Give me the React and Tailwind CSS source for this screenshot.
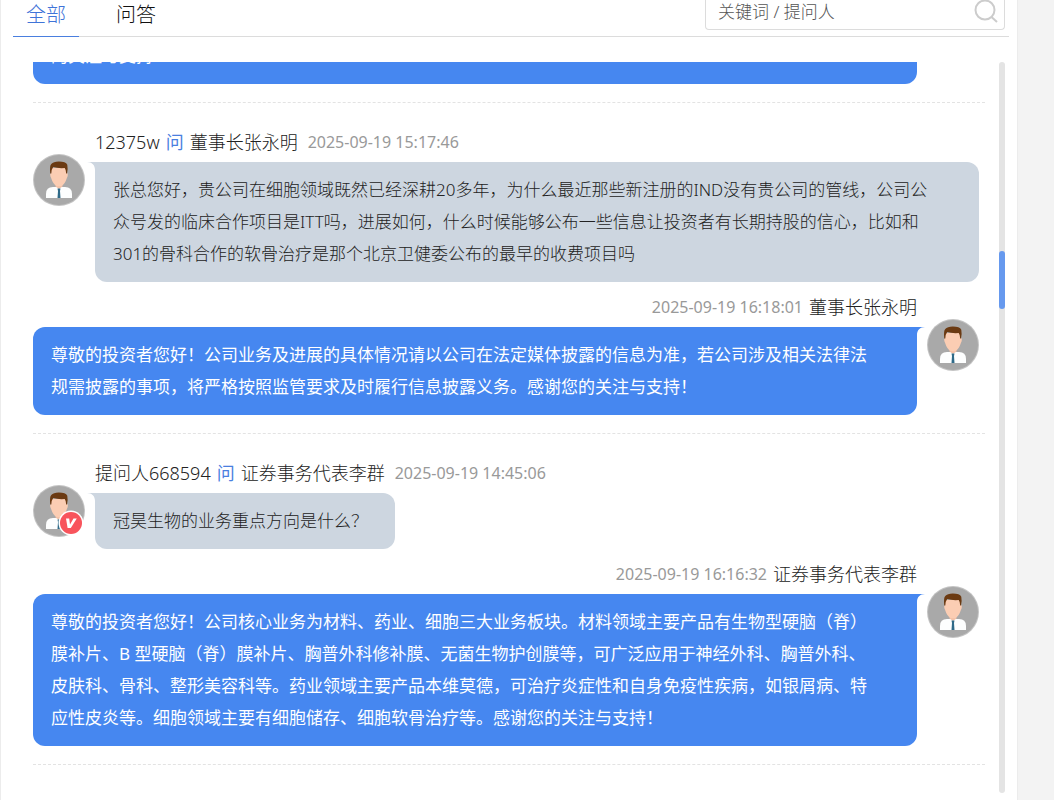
import React, { useState } from "react";

const items = [
  {
    id: 1,
    asker: "12375w",
    target: "董事长张永明",
    askedAt: "2025-09-19 15:17:46",
    question: [
      "张总您好，贵公司在细胞领域既然已经深耕20多年，为什么最近那些新注册的IND没有贵公司的管线，公司公",
      "众号发的临床合作项目是ITT吗，进展如何，什么时候能够公布一些信息让投资者有长期持股的信心，比如和",
      "301的骨科合作的软骨治疗是那个北京卫健委公布的最早的收费项目吗",
    ],
    repliedAt: "2025-09-19 16:18:01",
    answer: [
      "尊敬的投资者您好！公司业务及进展的具体情况请以公司在法定媒体披露的信息为准，若公司涉及相关法律法",
      "规需披露的事项，将严格按照监管要求及时履行信息披露义务。感谢您的关注与支持！",
    ],
  },
  {
    id: 2,
    asker: "提问人668594",
    verified: true,
    target: "证券事务代表李群",
    askedAt: "2025-09-19 14:45:06",
    question: ["冠昊生物的业务重点方向是什么？"],
    repliedAt: "2025-09-19 16:16:32",
    answer: [
      "尊敬的投资者您好！公司核心业务为材料、药业、细胞三大业务板块。材料领域主要产品有生物型硬脑（脊）",
      "膜补片、B 型硬脑（脊）膜补片、胸普外科修补膜、无菌生物护创膜等，可广泛应用于神经外科、胸普外科、",
      "皮肤科、骨科、整形美容科等。药业领域主要产品本维莫德，可治疗炎症性和自身免疫性疾病，如银屑病、特",
      "应性皮炎等。细胞领域主要有细胞储存、细胞软骨治疗等。感谢您的关注与支持！",
    ],
  },
];

const tabs = ["全部", "问答"];

function Avatar({ verified }) {
  return (
    <div className="relative mt-8 h-[52px] w-[52px] shrink-0">
      <svg viewBox="0 0 52 52" className="h-full w-full">
        <circle cx="26" cy="26" r="26" fill="#c4c4c4" />
        <circle cx="26" cy="26" r="25" fill="#a9a9a9" />
        <path d="M13 44v-4q0-7 7-7h12q7 0 7 7v4z" fill="#fdfefe" />
        <path d="M22.500 27h7v5.500L26 35l-3.500-2.500z" fill="#f3c2a8" />
        <path d="M18 14h16v5q1.200.3.700 3l-1 2.500Q32 30 28.500 32h-5Q20 30 18.300 24.500l-1-2.500q-.5-2.700.700-3z" fill="#fbcdb3" />
        <path d="M17.300 19.500q-1-7.500 1-9.500 2-2.500 7.500-2.500 7 0 8.500 3.200.8 3.800-.3 8.800h-.8q0-3.500-1.500-5.500-6.500.5-11.500-1-1.700 2-1.900 6.500z" fill="#6b3a12" />
        <path d="M24.500 34.500h3l-.5 2.500.5 7h-3l.5-7z" fill="#2f6a88" />
      </svg>
      {verified && (
        <svg viewBox="0 0 26 26" className="absolute right-px bottom-px h-[26px] w-[26px]">
          <circle cx="13" cy="13" r="12.500" fill="#fff" />
          <circle cx="13" cy="13" r="11" fill="#f8545c" />
          <path d="M8 8.500h3.200l.8 6 3.500-6h3.300L12.800 18H9.600z" fill="#fff" />
        </svg>
      )}
    </div>
  );
}

function Tail({ className, flip }) {
  return (
    <svg viewBox="0 0 8 8" className={className}>
      <path d={flip ? "M8 0H0v8C0 3 3 0 8 0z" : "M0 0h8v8C8 3 5 0 0 0z"} fill="currentColor" />
    </svg>
  );
}

function Question({ item }) {
  const long = item.question.length > 1;
  return (
    <div className="flex items-start gap-2.5">
      <Avatar verified={item.verified} />
      <div className={long ? "min-w-0 flex-1" : "min-w-0"}>
        <div className="flex h-10 items-center whitespace-nowrap text-lg text-[#222]">
          <span>{item.asker}</span>
          <span className="mx-1.5 font-normal text-[#4a7fdf]">问</span>
          <span>{item.target}</span>
          <time className="ml-2.5 text-base font-normal text-[#999]">{item.askedAt}</time>
        </div>
        <div
          className={`relative max-w-full rounded-xl rounded-tl-none bg-[#cdd6e0] py-3 pr-[27px] pl-[18px] text-[17px] leading-8 text-[#222] ${
            long ? "" : "w-fit"
          }`}
        >
          <Tail className="absolute top-0 -left-2 h-2 w-2 text-[#cdd6e0]" />
          {item.question.map((line) => (
            <p key={line}>{line}</p>
          ))}
        </div>
      </div>
    </div>
  );
}

function Answer({ item }) {
  return (
    <div className="mt-[5px] flex items-start gap-2.5">
      <div className="min-w-0 flex-1">
        <div className="flex h-10 items-center justify-end whitespace-nowrap text-lg text-[#222]">
          <time className="mr-1.5 text-base font-normal text-[#999]">{item.repliedAt}</time>
          <span>{item.target}</span>
        </div>
        <div className="relative rounded-xl rounded-tr-none bg-[#4687f0] px-[18px] py-3 text-[17px] leading-8 font-normal text-white">
          <Tail flip className="absolute top-0 -right-2 h-2 w-2 text-[#4687f0]" />
          {item.answer.map((line) => (
            <p key={line}>{line}</p>
          ))}
        </div>
      </div>
      <Avatar />
    </div>
  );
}

export default function App() {
  const [tab, setTab] = useState("全部");
  const [keyword, setKeyword] = useState("");

  return (
    <div className="h-screen bg-[#f3f3f3] pr-9 font-['Noto_Sans','Noto_Sans_CJK_SC',sans-serif] font-light">
      <main className="flex h-full flex-col border-x border-[#ececec] bg-white">
        <header className="mr-2 ml-3 flex h-[37px] shrink-0 items-end justify-between border-b border-[#dcdcdc]">
          <nav className="-mb-px flex gap-6">
            {tabs.map((name) => (
              <button
                key={name}
                onClick={() => setTab(name)}
                className={
                  tab === name
                    ? "h-[37px] border-b border-[#4a7fdf] px-[13px] pb-1.5 text-xl text-[#3f74d8]"
                    : "h-[37px] border-b border-transparent px-[13px] pb-1.5 text-xl text-[#111]"
                }
              >
                {name}
              </button>
            ))}
          </nav>
          <form
            className="mr-1 mb-1.5 flex h-[30px] w-[300px] items-start rounded-b-sm border border-t-0 border-[#dcdcdc]"
            onSubmit={(e) => e.preventDefault()}
          >
            <input
              type="text"
              aria-label="关键词 / 提问人"
              placeholder="关键词 / 提问人"
              value={keyword}
              onChange={(e) => setKeyword(e.target.value)}
              className="h-6 min-w-0 flex-1 pl-3 text-[17px] text-[#333] outline-none placeholder:text-[#555]"
            />
            <button type="submit" aria-label="搜索" className="mr-1.5 h-6 w-6">
              <svg viewBox="0 0 24 24" fill="none" stroke="#ccc" strokeWidth="2" className="h-full w-full">
                <circle cx="11" cy="10" r="9.500" />
                <path d="M17.500 17l5.500 5" />
              </svg>
            </button>
          </form>
        </header>

        <div className="mt-[25px] mb-[7px] flex min-h-0 flex-1 gap-3.5 pr-3 pl-8">
          <div className="min-w-0 flex-1 overflow-hidden">
            {/* tail of the previous answer, already scrolled */}
            <div className="-mt-[34px] border-b border-dashed border-[#e3e3e3] pr-[68px] pb-[18px]">
              <div className="rounded-xl bg-[#4687f0] px-[18px] py-3 text-[17px] leading-8 font-normal text-white">
                <p>的关注与支持</p>
              </div>
            </div>
            {items.map((item) => (
              <section
                key={item.id}
                className="border-b border-dashed border-[#e3e3e3] pt-[19px] pr-1.5 pb-[18px]"
              >
                <Question item={item} />
                <Answer item={item} />
              </section>
            ))}
          </div>
          <div className="w-1.5 shrink-0 rounded-full bg-[#e4e4e4] pt-[189px]">
            <div className="h-[58px] rounded-full bg-[#6699ee]" />
          </div>
        </div>
      </main>
    </div>
  );
}
